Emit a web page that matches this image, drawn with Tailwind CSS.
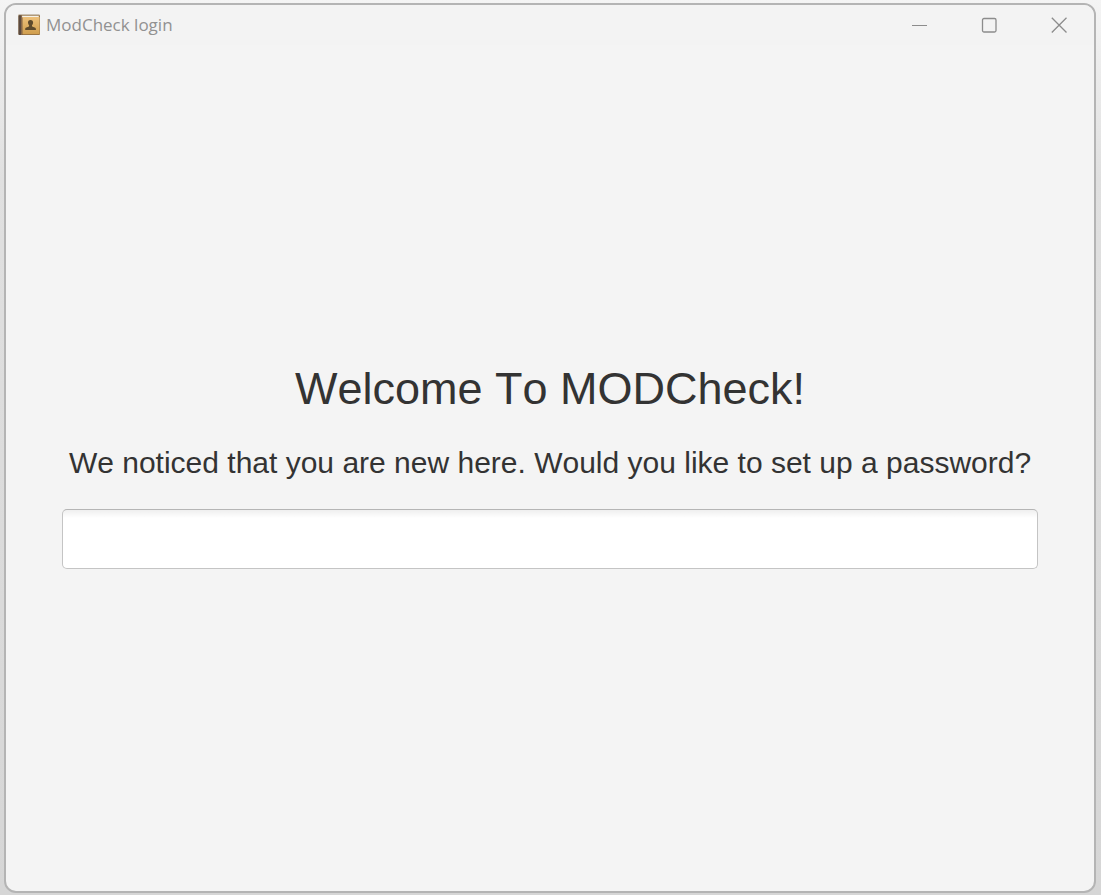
<!DOCTYPE html>
<html lang="en">
<head>
<meta charset="utf-8">
<meta name="viewport" content="width=device-width, initial-scale=1">
<title>ModCheck login</title>
<script src="https://cdn.jsdelivr.net/npm/@tailwindcss/browser@4"></script>
</head>
<body class="flex h-screen flex-col bg-linear-to-b from-[#f4f4f4] via-[#e0e0e0] via-20% to-[#d6d6d6] pt-[3px] pr-[5px] pb-[2px] pl-1 font-['Liberation_Sans',Arial,sans-serif]">
  <div class="flex grow flex-col overflow-hidden rounded-xl border-2 border-[#b4b4b4] bg-[#f4f4f4]">
    <header class="flex h-10 items-center justify-between bg-[#f3f3f3] pl-3">
      <div class="flex items-center gap-1.5">
        <svg class="size-[22px]" viewBox="0 0 22 22" aria-hidden="true">
          <defs>
            <linearGradient id="cover" x1="0" y1="0" x2="0" y2="1">
              <stop offset="0" stop-color="#edc079"/>
              <stop offset="1" stop-color="#d09e4e"/>
            </linearGradient>
          </defs>
          <rect x="0.5" y="1" width="21.5" height="20" rx="1" fill="#9a7442"/>
          <rect x="0.5" y="1" width="4" height="20" rx="1" fill="#5b4a3f"/>
          <path d="M3.5 1.5H21L20.500 3.500H4.500Z" fill="#f6f1e6"/>
          <rect x="4.500" y="3" width="17" height="17" fill="url(#cover)"/>
          <path d="M3.500 1V21" stroke="#8a6848" stroke-width="1"/>
          <path d="M0.500 1H21.500" stroke="#8d7352" stroke-width="0.800"/>
          <path d="M12.500 6c-1.800 0-2.600 1.200-2.500 2.700 0.100 1.100 0.500 1.900 1.100 2.500v1.100c-0.300 0.800-3.800 0.700-3.900 2.700v1h10.700v-1c-0.100-2-3.600-1.900-3.900-2.700v-1.100c0.600-0.600 1-1.400 1.100-2.500C15.200 7.200 14.300 6 12.500 6Z" fill="#5e4a2c"/>
        </svg>
        <h1 class="font-['Open_Sans','Noto_Sans',sans-serif] text-[17px] leading-6 text-[#919191]">ModCheck login</h1>
      </div>
      <div class="flex h-full text-[#8c8c8c]">
        <button type="button" aria-label="Minimize" class="flex w-[70px] items-center justify-center">
          <svg class="size-4" viewBox="0 0 16 16" fill="none" stroke="currentColor" aria-hidden="true"><path d="M1 8.500H16"/></svg>
        </button>
        <button type="button" aria-label="Maximize" class="flex w-[70px] items-center justify-center">
          <svg class="size-4" viewBox="0 0 16 16" fill="none" stroke="currentColor" stroke-width="1.300" aria-hidden="true"><rect x="1.500" y="1.500" width="13.500" height="13.500" rx="1.500"/></svg>
        </button>
        <button type="button" aria-label="Close" class="flex w-[70px] items-center justify-center">
          <svg class="size-4" viewBox="0 0 16 16" fill="none" stroke="currentColor" stroke-width="1.300" aria-hidden="true"><path d="M0.800 0.800L15.500 15.500M15.500 0.800L0.800 15.500"/></svg>
        </button>
      </div>
    </header>
    <main class="flex grow flex-col items-center justify-center px-14 pb-1 text-[#333333] [font-kerning:none]">
      <h2 class="text-[45px] leading-[52px]">Welcome To MODCheck!</h2>
      <label for="password" class="mt-[30px] text-center text-[30px] leading-9">We noticed that you are new here. Would you like to set up a password?</label>
      <input id="password" type="password" class="mt-7 h-[60px] w-full rounded-[5px] border border-[#c4c4c4] border-t-[#b5b5b5] bg-linear-to-b from-[#efefef] to-white to-[8px] px-4 text-[30px] outline-none">
    </main>
  </div>
</body>
</html>
